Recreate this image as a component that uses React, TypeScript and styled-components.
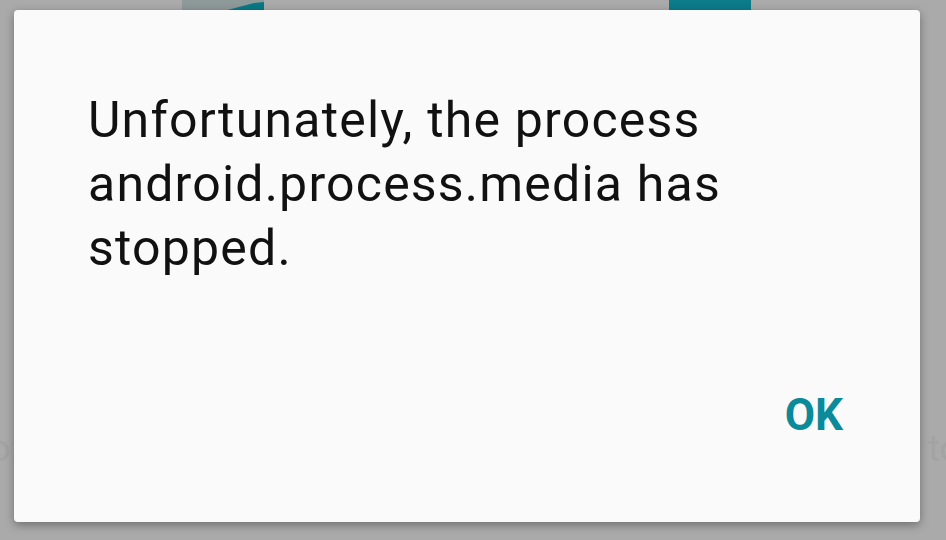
import React from 'react';
import styled, {createGlobalStyle} from 'styled-components';

const GlobalStyle = createGlobalStyle`
  html, body {
    margin: 0;
    padding: 0;
    background: #aaaaaa;
  }
  * {
    box-sizing: border-box;
  }
`

function App() {
    return (
        <>
            <GlobalStyle/>
            <Screen>
                <Behind>
                    <AppIcon left={182}>
                        <svg width="82" height="12" viewBox="0 0 82 12">
                            <path d="M0 0 H82 V12 H0 Z" fill="#8e9999"/>
                            <path d="M38 12 L72 3 L82 2 V12 Z" fill="#087985"/>
                        </svg>
                    </AppIcon>
                    <AppIcon left={669}>
                        <svg width="82" height="12" viewBox="0 0 82 12">
                            <rect width="82" height="12" fill="#0b7c88"/>
                        </svg>
                    </AppIcon>
                    <FaintLabel side="left">o</FaintLabel>
                    <FaintLabel side="right">to</FaintLabel>
                </Behind>
                <Dialog>
                    <Message>Unfortunately, the process android.process.media has stopped.</Message>
                    <Actions>
                        <OkButton>OK</OkButton>
                    </Actions>
                </Dialog>
            </Screen>
        </>
    );
}

export default App;

const Screen = styled.div`
  position: relative;
  width: 946px;
  height: 540px;
  overflow: hidden;
  background: #aaaaaa;
  padding: 10px 26px 18px 14px;
  font-family: Roboto, "Noto Sans", sans-serif;
`

// home screen that shows through the dimmed scrim
const Behind = styled.div`
  position: absolute;
  inset: 0;
  pointer-events: none;
`

const AppIcon = styled.div<{left: number}>`
  position: absolute;
  top: 0;
  left: ${p => p.left}px;
  line-height: 0;
`

const FaintLabel = styled.span<{side: 'left' | 'right'}>`
  position: absolute;
  top: 428px;
  ${p => p.side === 'left' ? 'left: -10px;' : 'left: 928px;'}
  font-size: 36px;
  color: #a3a3a3;
`

const Dialog = styled.div`
  position: relative;
  display: flex;
  flex-direction: column;
  width: 906px;
  height: 512px;
  background: #fafafa;
  border-radius: 4px;
  box-shadow: 0 3px 10px rgba(0, 0, 0, 0.35);
  padding: 78px 77px 0 74px;
`

const Message = styled.p`
  margin: 0;
  max-width: 700px;
  font-size: 50px;
  line-height: 64px;
  letter-spacing: 1.2px;
  font-weight: 400;
  color: #111111;
`

const Actions = styled.div`
  display: flex;
  justify-content: flex-end;
  margin-top: 109px;
`

const OkButton = styled.button`
  border: none;
  background: none;
  padding: 0;
  font-family: Roboto, "Noto Sans", sans-serif;
  font-size: 44px;
  line-height: 52px;
  font-weight: 700;
  color: #0b8a9a;
  cursor: pointer;
`
